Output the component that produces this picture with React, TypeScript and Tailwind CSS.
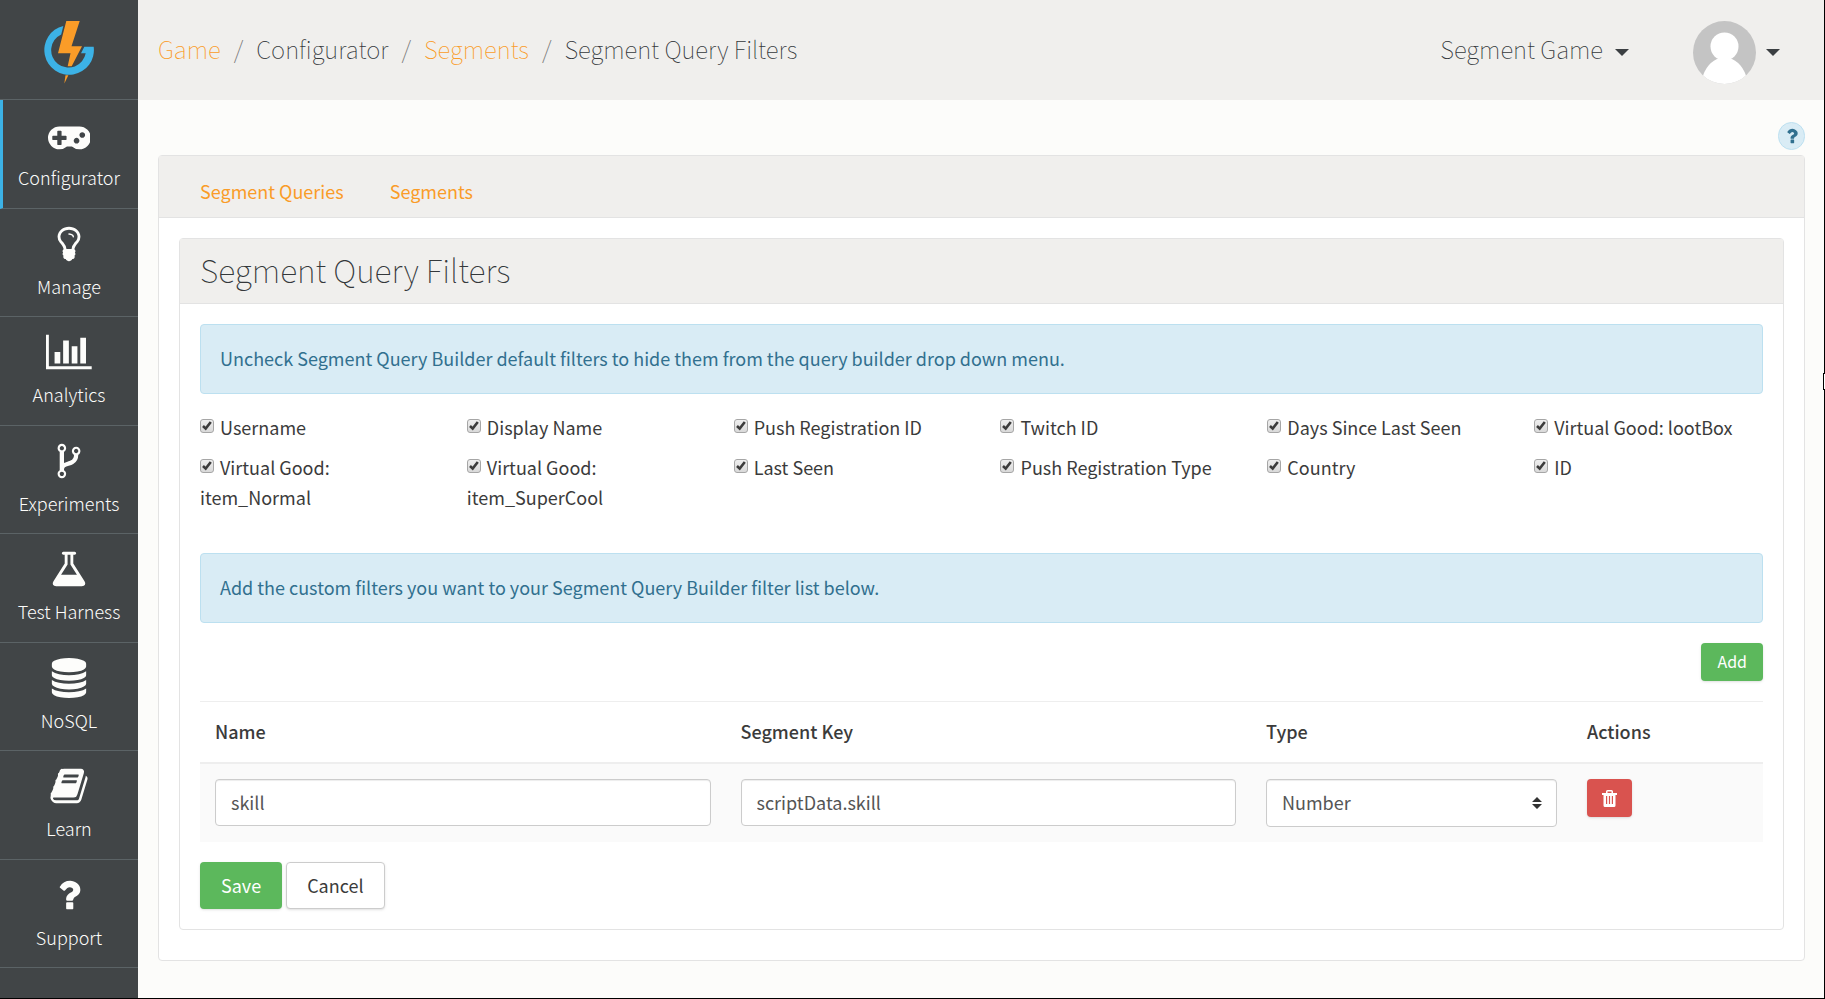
import React from "react";

const SANS = "font-['Noto_Sans_CJK_SC','Noto_Sans_CJK_JP',sans-serif]";

type Glyph = { d: string; w: number };

const glyphs: Record<string, Glyph> = {
  gamepad: {
    w: 1920,
    d: "M832 1088v-128q0-14-9-23t-23-9h-192v-192q0-14-9-23t-23-9h-128q-14 0-23 9t-9 23v192h-192q-14 0-23 9t-9 23v128q0 14 9 23t23 9h192v192q0 14 9 23t23 9h128q14 0 23-9t9-23v-192h192q14 0 23-9t9-23zm576 64q0-53-37.5-90.5t-90.5-37.5-90.5 37.5-37.5 90.5 37.5 90.5 90.5 37.5 90.5-37.5 37.5-90.5zm256-256q0-53-37.5-90.5t-90.5-37.5-90.5 37.5-37.5 90.5 37.5 90.5 90.5 37.5 90.5-37.5 37.5-90.5zm256 128q0 212-150 362t-362 150q-192 0-338-128h-220q-146 128-338 128-212 0-362-150t-150-362 150-362 362-150h896q212 0 362 150t150 362z",
  },
  bulb: {
    w: 1792,
    d: "M1120 576q0 13-9.5 22.5t-22.5 9.5-22.5-9.5-9.5-22.5q0-46-54-71t-106-25q-13 0-22.5-9.5t-9.5-22.5 9.5-22.5 22.5-9.5q50 0 99.5 16t87 54 37.5 90zm160 0q0-72-34.5-134t-90-101.5-123-62-136.5-22.5-136.5 22.5-123 62-90 101.5-34.5 134q0 101 68 180 10 11 30.5 33t30.5 33q128 153 141 298h228q13-145 141-298 10-11 30.5-33t30.5-33q68-79 68-180zm128 0q0 155-103 268-45 49-74.5 87t-59.5 95.5-34 107.5q47 28 47 82 0 37-25 64 25 27 25 64 0 52-45 81 13 23 13 47 0 46-31.5 71t-77.5 25q-20 44-60 70t-87 26-87-26-60-70q-46 0-77.5-25t-31.5-71q0-24 13-47-45-29-45-81 0-37 25-64-25-27-25-64 0-54 47-82-4-50-34-107.5t-59.5-95.5-74.5-87q-103-113-103-268 0-99 44.5-184.5t117-142 164-89 186.5-32.5 186.5 32.5 164 89 117 142 44.5 184.5z",
  },
  chart: {
    w: 2048,
    d: "M640 896v512h-256v-512h256zm384-512v1024h-256v-1024h256zm1024 1152v128h-2048v-1536h128v1408h1920zm-640-896v768h-256v-768h256zm384-384v1152h-256v-1152h256z",
  },
  fork: {
    w: 1792,
    d: "M672 1472q0-40-28-68t-68-28-68 28-28 68 28 68 68 28 68-28 28-68zm0-1152q0-40-28-68t-68-28-68 28-28 68 28 68 68 28 68-28 28-68zm640 128q0-40-28-68t-68-28-68 28-28 68 28 68 68 28 68-28 28-68zm96 0q0 52-26 96.5t-70 69.5q-2 287-226 414-67 38-203 81-128 40-169.5 71t-41.5 100v26q44 25 70 69.5t26 96.5q0 80-56 136t-136 56-136-56-56-136q0-52 26-96.5t70-69.5v-820q-44-25-70-69.5t-26-96.5q0-80 56-136t136-56 136 56 56 136q0 52-26 96.5t-70 69.5v497q54-26 154-57 55-17 87.5-29.5t70.5-31 59-39.5 40.5-51 28-69.5 8.5-91.5q-44-25-70-69.5t-26-96.5q0-80 56-136t136-56 136 56 56 136z",
  },
  flask: {
    w: 1792,
    d: "M1591 1448q56 89 21.5 152.5t-140.5 63.5h-1152q-106 0-140.5-63.5t21.5-152.5l503-793v-399h-64q-26 0-45-19t-19-45 19-45 45-19h512q26 0 45 19t19 45-19 45-45 19h-64v399zm-779-725l-272 429h712l-272-429-20-31v-436h-128v436z",
  },
  database: {
    w: 1792,
    d: "M896 768q237 0 443-43t325-127v170q0 69-103 128t-280 93.5-385 34.5-385-34.5-280-93.5-103-128v-170q119 84 325 127t443 43zm0 768q237 0 443-43t325-127v170q0 69-103 128t-280 93.5-385 34.5-385-34.5-280-93.5-103-128v-170q119 84 325 127t443 43zm0-384q237 0 443-43t325-127v170q0 69-103 128t-280 93.5-385 34.5-385-34.5-280-93.5-103-128v-170q119 84 325 127t443 43zm0-1152q208 0 385 34.5t280 93.5 103 128v128q0 69-103 128t-280 93.5-385 34.5-385-34.5-280-93.5-103-128v-128q0-69 103-128t280-93.5 385-34.5z",
  },
  book: {
    w: 1792,
    d: "M1703 478q40 57 18 129l-275 906q-19 64-76.5 107.5t-122.5 43.5h-923q-77 0-148.5-53.5t-99.5-131.5q-24-67-2-127 0-4 3-27t4-37q1-8-3-21.5t-3-19.5q2-11 8-21t16.5-23.5 16.5-23.5q23-38 45-91.5t30-91.5q3-10 .5-30t-.5-28q3-11 17-28t17-23q21-36 42-92t25-90q1-9-2.5-32t.5-28q4-13 22-30.5t22-22.5q19-26 42.5-84.5t27.5-96.5q1-8-3-25.5t-2-26.5q2-8 9-18t18-23 17-21q8-12 16.5-30.5t15-35 16-36 19.5-32 26.5-23.5 36-11.5 47.5 5.5l-1 3q38-9 51-9h761q74 0 114 56t18 130l-274 906q-36 119-71.5 153.5t-128.5 34.5h-869q-27 0-38 15-11 16-1 43 24 70 144 70h923q29 0 56-15.5t35-41.5l300-987q7-22 5-57 38 15 59 43zm-1064 2q-4 13 2 22.5t20 9.5h608q13 0 25.5-9.5t16.5-22.5l21-64q4-13-2-22.5t-20-9.5h-608q-13 0-25.5 9.5t-16.5 22.5zm-83 256q-4 13 2 22.5t20 9.5h608q13 0 25.5-9.5t16.5-22.5l21-64q4-13-2-22.5t-20-9.5h-608q-13 0-25.5 9.5t-16.5 22.5z",
  },
  question: {
    w: 1792,
    d: "M1088 1256v240q0 16-12 28t-28 12h-240q-16 0-28-12t-12-28v-240q0-16 12-28t28-12h240q16 0 28 12t12 28zm316-600q0 54-15.5 101t-35 76.5-55 59.5-57.5 43.5-61 35.5q-41 23-68.5 65t-27.5 67q0 17-12 32.5t-28 15.5h-240q-15 0-25.5-18.5t-10.5-37.5v-45q0-83 65-156.5t143-108.5q59-27 84-56t25-76q0-42-46.5-74t-107.5-32q-65 0-108 29-35 25-107 115-13 16-31 16-12 0-25-8l-164-125q-13-10-15.5-25t5.5-28q160-266 464-266 80 0 161 31t146 83 106 127.5 41 158.5z",
  },
};

function Icon({ name, className }: { name: string; className: string }) {
  const g = glyphs[name];
  return (
    <svg viewBox={`0 0 ${g.w} 1792`} className={className} fill="currentColor" aria-hidden="true">
      <path d={g.d} />
    </svg>
  );
}

const navItems = [
  { label: "Configurator", icon: "gamepad" },
  { label: "Manage", icon: "bulb" },
  { label: "Analytics", icon: "chart" },
  { label: "Experiments", icon: "fork" },
  { label: "Test Harness", icon: "flask" },
  { label: "NoSQL", icon: "database" },
  { label: "Learn", icon: "book" },
  { label: "Support", icon: "question" },
];

function Logo() {
  return (
    <svg viewBox="0 0 50 64" className="h-16 w-[50px]" aria-label="Home">
      <path
        d="M19.3 4.900A24.800 24.800 0 1 0 49.700 25.700H40.300L37 32.300H41.700A17.400 17.400 0 1 1 17.200 13.400Z"
        fill="#3cb2e6"
      />
      <path d="M22.300 0H35.700L27.500 25.300H38L27.700 45.300H23.700L26.500 32.300H14Z" fill="#fa9c28" />
      <path d="M21.500 54.300H24.400L20.300 62.500Z" fill="#fa9c28" />
    </svg>
  );
}

function Sidebar() {
  return (
    <aside className="flex w-[138px] shrink-0 flex-col bg-[#414547]">
      <a href="#" className="flex h-[100px] items-start justify-center border-b border-[#5b6366] pt-[21px]">
        <Logo />
      </a>
      <nav className="grid h-[868px] auto-rows-fr">
        {navItems.map((item, i) => (
          <a
            key={item.label}
            href="#"
            className={
              "flex flex-col items-center border-b border-b-[#5b6366] pt-[15px] text-lg font-light leading-7 text-[#fdfdfb] " +
              (i === 0 ? "border-l-3 border-l-[#3cb2e6] pr-[3px]" : "")
            }
          >
            <Icon name={item.icon} className="mb-2 h-10" />
            {item.label}
          </a>
        ))}
      </nav>
    </aside>
  );
}

function Caret() {
  return (
    <svg viewBox="0 0 14 7" className="h-[7px] w-3.5" fill="#3b3f42" aria-hidden="true">
      <path d="M0 0H14L7 7Z" />
    </svg>
  );
}

function Header() {
  return (
    <header className="flex h-[100px] items-center justify-between bg-[#f0efed] pb-0.5 pl-5 pr-11 text-2xl font-thin text-[#34383b]">
      <ol className="flex items-center">
        <li><a href="#" className="text-[#fa9c28]">Game</a></li>
        <li className="px-[13px] text-[#777]">/</li>
        <li>Configurator</li>
        <li className="px-[13px] text-[#777]">/</li>
        <li><a href="#" className="text-[#fa9c28]">Segments</a></li>
        <li className="px-[13px] text-[#777]">/</li>
        <li>Segment Query Filters</li>
      </ol>
      <div className="flex items-center gap-16 pt-1.5">
        <button type="button" className="flex items-center gap-3 pb-1.5">
          Segment Game
          <span className="pt-1.5">
            <Caret />
          </span>
        </button>
        <button type="button" aria-label="Account" className="flex items-center gap-2.5">
          <svg viewBox="0 0 63 63" className="size-[63px] rounded-full" aria-hidden="true">
            <rect width="63" height="63" fill="#c4c4c4" />
            <circle cx="31.500" cy="25.500" r="14" fill="#fff" />
            <path d="M8 63Q11 44 24 38H39Q52 44 55 63Z" fill="#fff" />
          </svg>
          <Caret />
        </button>
      </div>
    </header>
  );
}

function Alert({ children }: { children: React.ReactNode }) {
  return (
    <div className="rounded border border-[#bce0f0] bg-[#d9ecf5] px-[19px] pb-[21px] pt-[19px] leading-7 text-[#31708f]">
      {children}
    </div>
  );
}

const filters = [
  "Username",
  "Display Name",
  "Push Registration ID",
  "Twitch ID",
  "Days Since Last Seen",
  "Virtual Good: lootBox",
  "Virtual Good: item_Normal",
  "Virtual Good: item_SuperCool",
  "Last Seen",
  "Push Registration Type",
  "Country",
  "ID",
];

function Filter({ label }: { label: string }) {
  return (
    <label className="leading-[30px]">
      <span className="relative mr-1.5 inline-block size-3.5 align-[2px]">
        <input
          type="checkbox"
          defaultChecked
          className="peer block size-3.5 appearance-none rounded-[3px] border border-[#a6a6a6] bg-linear-to-b from-[#efefef] to-[#d9d9d9]"
        />
        <svg
          viewBox="0 0 14 14"
          className="pointer-events-none absolute inset-0 hidden size-3.5 peer-checked:block"
          fill="none"
          stroke="#3c3c3c"
          strokeWidth="2.600"
          aria-hidden="true"
        >
          <path d="M3 7L5.700 9.600L10.800 3" />
        </svg>
      </span>
      {label}
    </label>
  );
}

const field =
  "block w-full rounded border border-[#ccc] bg-white px-[15px] pb-0.5 text-[#555] shadow-[inset_0_1px_1px_rgba(0,0,0,0.075)]";

function FilterTable() {
  return (
    <table className="w-full table-fixed border-t border-[#eee] text-left">
      <thead>
        <tr className="border-b-2 border-[#eee]">
          <th className="px-[15px] pb-4 pt-3.5 font-medium leading-[30px]">Name</th>
          <th className="px-[15px] pb-4 pt-3.5 font-medium leading-[30px]">Segment Key</th>
          <th className="w-[321px] px-[15px] pb-4 pt-3.5 font-medium leading-[30px]">Type</th>
          <th className="w-[191px] px-[15px] pb-4 pt-3.5 font-medium leading-[30px]">Actions</th>
        </tr>
      </thead>
      <tbody>
        <tr className="bg-[#fafafa] align-top">
          <td className="p-[15px]">
            <input aria-label="Name" defaultValue="skill" className={field + " h-[47px]"} />
          </td>
          <td className="p-[15px]">
            <input aria-label="Segment Key" defaultValue="scriptData.skill" className={field + " h-[47px]"} />
          </td>
          <td className="p-[15px]">
            <div className="relative">
              <select aria-label="Type" className={field + " h-12 appearance-none"}>
                <option>Number</option>
                <option>String</option>
              </select>
              <svg
                viewBox="0 0 10 12"
                className="pointer-events-none absolute right-[15px] top-[18px] h-3 w-2.5"
                fill="#333"
                aria-hidden="true"
              >
                <path d="M5 0L10 5H0ZM0 7H10L5 12Z" />
              </svg>
            </div>
          </td>
          <td className="p-[15px]">
            <button
              type="button"
              aria-label="Delete"
              className="flex h-[38px] w-[45px] items-center justify-center rounded-sm bg-[#d9534f] shadow-sm"
            >
              <svg viewBox="0 0 15 17" className="h-[17px] w-[15px]" fill="#fff" fillRule="evenodd" aria-hidden="true">
                <path d="M4 3V1.500Q4 0 5.500 0H9.500Q11 0 11 1.500V3H15V5H0V3ZM5.500 3H9.500V1.500H5.500ZM1.500 5H13.500V15.500Q13.500 17 12 17H3Q1.500 17 1.500 15.500ZM4 6V14H5.200V6ZM6.900 6V14H8.100V6ZM9.800 6V14H11V6Z" />
              </svg>
            </button>
          </td>
        </tr>
      </tbody>
    </table>
  );
}

export default function App() {
  return (
    <div className={"relative flex min-h-screen border-b border-r border-black bg-[#fcfcfa] text-lg text-[#3b3b3b] " + SANS}>
      <Sidebar />
      <div className="min-w-0 flex-1">
        <Header />
        <main className="pl-5 pr-[19px] pt-[22px]">
          <div className="flex justify-end">
            <button
              type="button"
              aria-label="Help"
              className="mb-[5px] flex h-7 w-[27px] items-center justify-center rounded-full border border-[#bce0f0] bg-[#d9ecf5] text-[#31708f]"
            >
              <Icon name="question" className="h-5" />
            </button>
          </div>
          <section className="rounded border border-[#e3e3e3] bg-white">
            <nav className="flex gap-[46px] border-b border-[#e3e3e3] bg-[#f0efed] px-[41px] pb-[11px] pt-5 leading-[30px] text-[#fa9c28]">
              <a href="#">Segment Queries</a>
              <a href="#">Segments</a>
            </nav>
            <div className="px-5 pb-[30px] pt-5">
              <section className="rounded border border-[#e3e3e3]">
                <h1 className="border-b border-[#e3e3e3] bg-[#f0efed] px-5 pb-1 text-[32px] font-thin leading-[60px] text-[#34383b]">
                  Segment Query Filters
                </h1>
                <div className="p-5">
                  <Alert>Uncheck Segment Query Builder default filters to hide them from the query builder drop down menu.</Alert>
                  <div className="mb-[41px] mt-[18px] grid grid-cols-6 gap-x-[38px] gap-y-2.5">
                    {filters.map((f) => (
                      <Filter key={f} label={f} />
                    ))}
                  </div>
                  <Alert>Add the custom filters you want to your Segment Query Builder filter list below.</Alert>
                  <div className="my-5 flex justify-end">
                    <button type="button" className="h-[38px] rounded-sm bg-[#5cb85c] px-4 pb-0.5 text-base text-white shadow-sm">
                      Add
                    </button>
                  </div>
                  <FilterTable />
                  <div className="mt-5 flex gap-1">
                    <button type="button" className="h-[47px] rounded bg-[#5cb85c] px-[21px] pb-0.5 text-white shadow-sm">
                      Save
                    </button>
                    <button type="button" className="h-[47px] rounded border border-[#ccc] bg-white px-5 pb-0.5 shadow-sm">
                      Cancel
                    </button>
                  </div>
                </div>
              </section>
            </div>
          </section>
        </main>
      </div>
      <div className="absolute -right-px top-[373px] h-[17px] w-0.5 border-y border-l border-black bg-white" aria-hidden="true" />
    </div>
  );
}
